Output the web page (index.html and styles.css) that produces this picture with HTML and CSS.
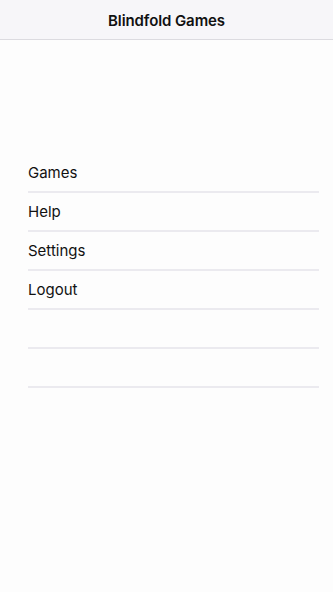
FILE: index.html
```html
<!DOCTYPE html>
<html>
<head>
<meta charset="utf-8">
<link rel="stylesheet" href="styles.css">
</head>
<body>
<header class="navbar"><h1 class="title">Blindfold Games</h1></header>
<main class="content">
  <ul class="menu">
    <li class="item">Games</li>
    <li class="item">Help</li>
    <li class="item">Settings</li>
    <li class="item">Logout</li>
    <li class="item"></li>
    <li class="item"></li>
  </ul>
</main>
</body>
</html>
```
FILE: styles.css
```css
html, body { margin: 0; padding: 0; }
body {
  background: #fdfdfd;
  font-family: Inter, "Noto Sans", sans-serif;
  color: #111;
  width: 333px;
  height: 592px;
}
.navbar {
  height: 39px;
  background: #f7f6f9;
  border-bottom: 1px solid #dcdbe0;
  display: flex;
  align-items: center;
  justify-content: center;
}
.title {
  margin: 0;
  padding-top: 1px;
  font-size: 15px;
  font-weight: 600;
  letter-spacing: -0.1px;
  color: #111;
}
.content { padding: 114px 14px 0 28px; }
.menu { list-style: none; margin: 0; padding: 0; }
.item {
  height: 37px;
  border-bottom: 2px solid #ebeaef;
  display: flex;
  align-items: center;
  font-size: 15px;
}
```
